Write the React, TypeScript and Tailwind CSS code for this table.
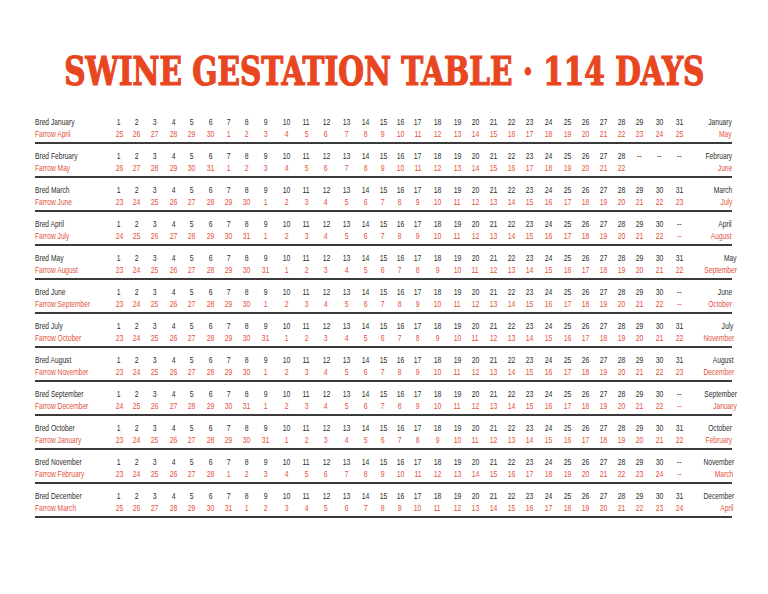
import React from 'react';

const bred = [
  { name: 'January', days: 31, farrow: 'April', start: 25, len: 30, next: 'May' },
  { name: 'February', days: 28, farrow: 'May', start: 26, len: 31, next: 'June' },
  { name: 'March', days: 31, farrow: 'June', start: 23, len: 30, next: 'July' },
  { name: 'April', days: 30, farrow: 'July', start: 24, len: 31, next: 'August' },
  { name: 'May', days: 31, farrow: 'August', start: 23, len: 31, next: 'September' },
  { name: 'June', days: 30, farrow: 'September', start: 23, len: 30, next: 'October' },
  { name: 'July', days: 31, farrow: 'October', start: 23, len: 31, next: 'November' },
  { name: 'August', days: 31, farrow: 'November', start: 23, len: 30, next: 'December' },
  { name: 'September', days: 30, farrow: 'December', start: 24, len: 31, next: 'January' },
  { name: 'October', days: 31, farrow: 'January', start: 23, len: 31, next: 'February' },
  { name: 'November', days: 30, farrow: 'February', start: 23, len: 28, next: 'March' },
  { name: 'December', days: 31, farrow: 'March', start: 25, len: 31, next: 'April' },
];

const days = Array.from({ length: 31 }, (_, i) => i + 1);

const cols =
  'grid-cols-[75.5px_17px_18px_18.5px_18.5px_18.5px_18.5px_17.5px_18.5px_20.5px_20.5px_19.5px_20px_20.5px_18px_17px_17px_18.5px_20.5px_19px_17.5px_18.5px_18px_18px_19px_19px_18.5px_17.5px_17.5px_19.5px_20px_19px_1fr]';

const dark = 'text-[#2e2e2e]';
const red = 'text-[#e2523a]';

const App = () => {
  return (
    <div className="w-[768px] h-[594px] bg-white overflow-hidden">
      {/* Title */}
      <div className="flex justify-center pt-[51px]">
        <h1 className="shrink-0 whitespace-nowrap scale-x-[0.82] text-[40px] leading-[40px] font-bold text-[#e8461f] [-webkit-text-stroke:1.2px_#e8461f] font-['DejaVu_Serif_Condensed','DejaVu_Serif',serif]">
          SWINE GESTATION TABLE · 114 DAYS
        </h1>
      </div>

      {/* Table */}
      <div className="ml-[35px] mt-[19px] w-[697px] font-['Liberation_Sans','Arial',sans-serif] text-[9.8px] leading-[11.5px]">
        {bred.map((row) => (
          <div
            key={row.name}
            className={`grid ${cols} pt-[6px] pb-[3px] border-b-2 border-[#3a3a3a]`}
          >
            <div className="flex flex-col items-start whitespace-nowrap">
              <span className={`inline-block origin-left scale-x-[0.68] ${dark}`}>Bred {row.name}</span>
              <span className={`inline-block origin-left scale-x-[0.68] ${red}`}>Farrow {row.farrow}</span>
            </div>
            {days.map((d) => {
              const exists = d <= row.days;
              let f = row.start + d - 1;
              if (f > row.len) f -= row.len;
              return (
                <div key={d} className="flex flex-col items-center">
                  <span className={`inline-block scale-x-[0.7] ${dark}`}>{exists ? d : '--'}</span>
                  <span className={`inline-block scale-x-[0.7] min-h-[11.5px] ${red}`}>
                    {exists ? f : row.name === 'February' ? '' : '--'}
                  </span>
                </div>
              );
            })}
            <div className="flex flex-col items-end whitespace-nowrap">
              <span className={`inline-block origin-right scale-x-[0.68] ${dark}`}>{row.name}</span>
              <span className={`inline-block origin-right scale-x-[0.68] ${red}`}>{row.next}</span>
            </div>
          </div>
        ))}
      </div>
    </div>
  );
};

export default App;
